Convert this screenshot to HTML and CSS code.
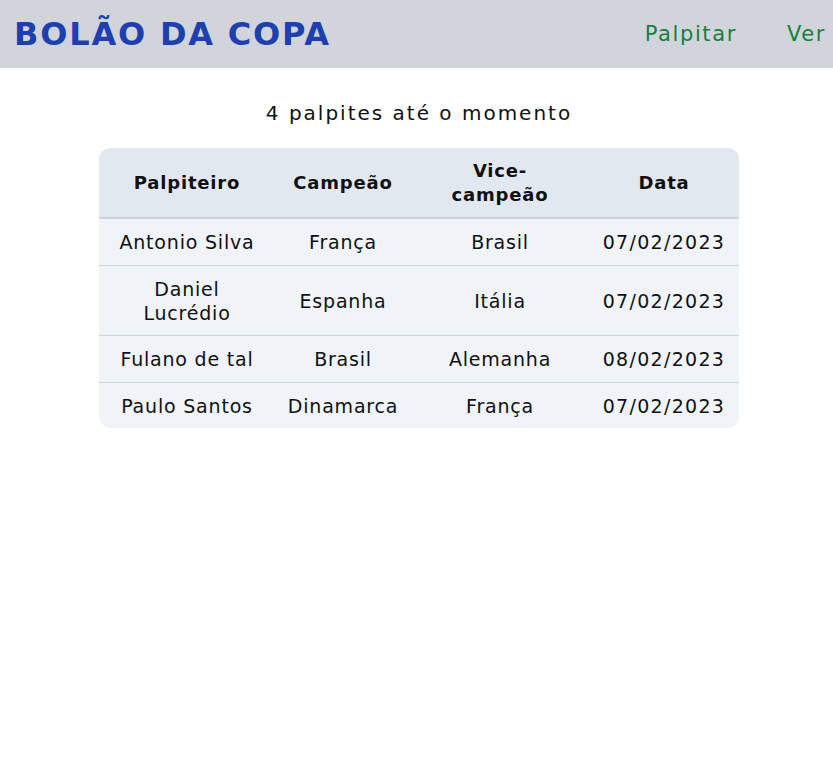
FILE: index.html
```html
<!DOCTYPE html>
<html lang="pt-BR">
<head>
<meta charset="utf-8">
<title>Bolão da Copa</title>
<link rel="stylesheet" href="styles.css">
</head>
<body>
<header class="topbar">
  <h1 class="brand">BOLÃO DA COPA</h1>
  <nav class="nav">
    <a class="nav-link" href="#">Palpitar</a>
    <a class="nav-link" href="#">Ver</a>
  </nav>
</header>
<main class="content">
  <p class="count">4 palpites até o momento</p>
  <div class="table-wrap">
    <table class="guesses">
      <colgroup>
        <col class="c1"><col class="c2"><col class="c3"><col class="c4">
      </colgroup>
      <thead>
        <tr><th>Palpiteiro</th><th>Campeão</th><th>Vice-<br>campeão</th><th>Data</th></tr>
      </thead>
      <tbody>
        <tr><td>Antonio Silva</td><td>França</td><td>Brasil</td><td class="date">07/02/2023</td></tr>
        <tr><td>Daniel<br>Lucrédio</td><td>Espanha</td><td>Itália</td><td class="date">07/02/2023</td></tr>
        <tr><td>Fulano de tal</td><td>Brasil</td><td>Alemanha</td><td class="date">08/02/2023</td></tr>
        <tr><td>Paulo Santos</td><td>Dinamarca</td><td>França</td><td class="date">07/02/2023</td></tr>
      </tbody>
    </table>
  </div>
</main>
</body>
</html>
```
FILE: styles.css
```css
* { box-sizing: border-box; }
html, body { margin: 0; padding: 0; background: #ffffff; }
body { font-family: "DejaVu Sans", "Noto Sans", sans-serif; color: #111111; overflow: hidden; }

.topbar {
  height: 68px;
  background: #d1d5db;
  display: flex;
  align-items: center;
  justify-content: space-between;
  padding: 0 7px 0 14px;
}
.brand {
  margin: 0;
  font-family: "DejaVu Sans", sans-serif;
  font-weight: 700;
  font-size: 32px;
  color: #1e40af;
  letter-spacing: 1.8px;
}
.nav { display: flex; gap: 50px; }
.nav-link {
  color: #15803d;
  text-decoration: none;
  font-size: 21px;
  letter-spacing: 1.6px;
}

.content { display: flex; flex-direction: column; align-items: center; padding-left: 5px; }
.count {
  margin: 32px 0 22px;
  font-size: 20px;
  line-height: 26px;
  letter-spacing: 2px;
}
.table-wrap {
  width: 640px;
  border-radius: 12px;
  overflow: hidden;
  background: #f0f3f8;
}
.guesses {
  width: 100%;
  border-collapse: collapse;
  table-layout: fixed;
  font-size: 19px;
  letter-spacing: 0.8px;
}
.c1 { width: 176px; }
.c2 { width: 136px; }
.c3 { width: 178px; }
.c4 { width: 150px; }
.guesses th {
  background: #e2e8f0;
  font-weight: 700;
  font-size: 18px;
  letter-spacing: 0.8px;
  line-height: 24px;
  height: 70px;
  padding: 0 6px;
  border-bottom: 2px solid #cbd5e1;
  text-align: center;
}
.guesses td {
  text-align: center;
  line-height: 24px;
  padding: 11px 2px 10.5px;
  border-top: 1px solid #cbd5e1;
  white-space: nowrap;
}
.guesses td.date { letter-spacing: 1.3px; }
.guesses tbody tr:first-child td { border-top: none; }
```
